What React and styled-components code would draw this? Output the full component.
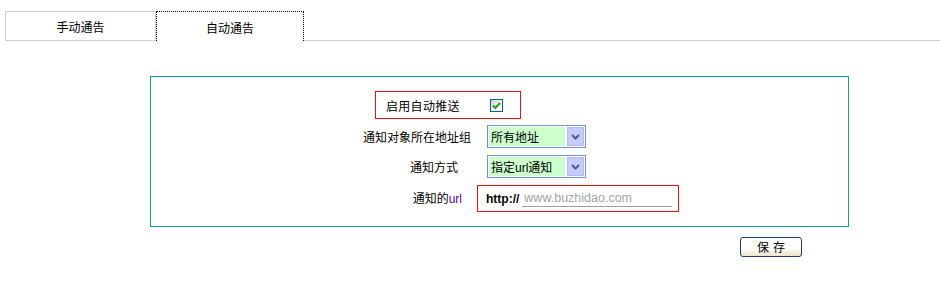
import React from "react";
import styled, { createGlobalStyle } from "styled-components";

const GlobalStyle = createGlobalStyle`
  html, body { margin: 0; padding: 0; background: #fff; }
  body {
    font-family: "Noto Sans CJK SC", "Liberation Sans", sans-serif;
    font-size: 12px;
    color: #000;
  }
  * { box-sizing: border-box; }
`;

const Page = styled.div`
  padding-top: 11px;
  width: 940px;
  height: 292px;
`;

const TabBar = styled.div`
  display: flex;
  padding-left: 5px;
  height: 30px;
`;

const Tab = styled.div`
  width: ${(p) => (p.$active ? 148 : 151)}px;
  height: 30px;
  display: flex;
  align-items: center;
  justify-content: center;
  border: ${(p) => (p.$active ? "1px dotted #000" : "1px solid #cccccc")};
  border-bottom: ${(p) => (p.$active ? "none" : "1px solid #cccccc")};
  padding-top: 2px;
  line-height: 1;
`;

const TabFiller = styled.div`
  flex: 1;
  border-bottom: 1px solid #cccccc;
`;

const Panel = styled.div`
  margin: 35px 0 0 150px;
  width: 699px;
  height: 151px;
  border: 1px solid #119a9a;
  padding-top: 14px;
  display: flex;
  flex-direction: column;
  gap: 6px;
`;

const Highlight = styled.div`
  border: 1px solid #ee1111;
  display: flex;
  align-items: center;
`;

const EnableBox = styled(Highlight)`
  margin-left: 224px;
  width: 146px;
  height: 28px;
  padding-left: 10px;
`;

const EnableLabel = styled.span`
  width: 104px;
  letter-spacing: 0.3px;
`;

const FormRow = styled.div`
  display: grid;
  grid-template-columns: 320px 1fr;
  column-gap: 6px;
  align-items: ${(p) => p.$align || "start"};
  height: ${(p) => p.$h}px;
`;

const Label = styled.div`
  text-align: right;
  padding-right: ${(p) => p.$pad || 0}px;
  line-height: ${(p) => p.$lh || 23}px;
`;

const Purple = styled.span`
  color: #660099;
  font-family: "Liberation Sans", sans-serif;
`;

const SelectBox = styled.div`
  margin-left: 10px;
  width: 99px;
  height: 23px;
  border: 1px solid #6f95d4;
  background: #fff;
  padding: 1px;
  display: flex;
  gap: 2px;
`;

const SelectValue = styled.div`
  flex: 1;
  background: #ccffcc;
  padding-left: 2px;
  line-height: 19px;
  white-space: nowrap;
  overflow: hidden;
`;

const Latin = styled.span`
  font-family: "Liberation Sans", sans-serif;
`;

const SelectButton = styled.div`
  width: 17px;
  background: #c9c9fb;
  border: 1px solid #b4b9f2;
  display: flex;
  align-items: center;
  justify-content: center;
`;

const UrlBox = styled(Highlight)`
  width: 202px;
  height: 27px;
  padding-left: 8px;
`;

const Http = styled.span`
  font-family: "Liberation Sans", sans-serif;
  font-weight: bold;
  font-size: 12px;
  margin-right: 3px;
`;

const UrlInput = styled.input`
  width: 150px;
  height: 17px;
  border: none;
  border-bottom: 1px solid #a0a0a0;
  outline: none;
  padding: 0 0 0 2px;
  font-family: "Liberation Sans", sans-serif;
  font-size: 12.5px;
  background: transparent;
  &::placeholder { color: #a3a3a3; }
`;

const ButtonRow = styled.div`
  margin-top: 10px;
  padding-left: 740px;
`;

const SaveButton = styled.button`
  width: 62px;
  height: 20px;
  border: 1px solid #1d3b6e;
  border-radius: 3px;
  background: linear-gradient(#ffffff 0%, #ffffff 55%, #ebe3c8 100%);
  font-family: "Noto Sans CJK SC", sans-serif;
  font-size: 12px;
  line-height: 1;
  padding: 0;
  letter-spacing: 4px;
  text-indent: 4px;
  color: #000;
`;

const CheckIcon = () => (
  <svg width="13" height="13" viewBox="0 0 13 13" style={{ display: "block" }}>
    <defs>
      <linearGradient id="cbg" x1="0" y1="0" x2="1" y2="1">
        <stop offset="0" stopColor="#c8c8c8" />
        <stop offset="0.5" stopColor="#f4f4f4" />
        <stop offset="1" stopColor="#ffffff" />
      </linearGradient>
    </defs>
    <rect x="0.5" y="0.5" width="12" height="12" fill="url(#cbg)" stroke="#1f5a8f" />
    <path d="M3 6.5 L5.3 9 L10 3.8" fill="none" stroke="#21a121" strokeWidth="2" />
  </svg>
);

const Chevron = () => (
  <svg width="9" height="6" viewBox="0 0 9 6" style={{ display: "block" }}>
    <path d="M1 1 L4.5 4.5 L8 1" fill="none" stroke="#3a5f9a" strokeWidth="2" />
  </svg>
);

const Select = ({ children }) => (
  <SelectBox>
    <SelectValue>{children}</SelectValue>
    <SelectButton>
      <Chevron />
    </SelectButton>
  </SelectBox>
);

export default function App() {
  return (
    <Page>
      <GlobalStyle />
      <TabBar>
        <Tab>手动通告</Tab>
        <Tab $active>自动通告</Tab>
        <TabFiller />
      </TabBar>
      <Panel>
        <EnableBox>
          <EnableLabel>启用自动推送</EnableLabel>
          <CheckIcon />
        </EnableBox>
        <FormRow $h={24}>
          <Label>通知对象所在地址组</Label>
          <Select>所有地址</Select>
        </FormRow>
        <FormRow $h={23}>
          <Label $pad={13}>通知方式</Label>
          <Select>
            指定<Latin>url</Latin>通知
          </Select>
        </FormRow>
        <FormRow $h={27} $align="center">
          <Label $pad={9} $lh={27}>
            通知的<Purple>url</Purple>
          </Label>
          <UrlBox>
            <Http>http://</Http>
            <UrlInput placeholder="www.buzhidao.com" />
          </UrlBox>
        </FormRow>
      </Panel>
      <ButtonRow>
        <SaveButton>保存</SaveButton>
      </ButtonRow>
    </Page>
  );
}
